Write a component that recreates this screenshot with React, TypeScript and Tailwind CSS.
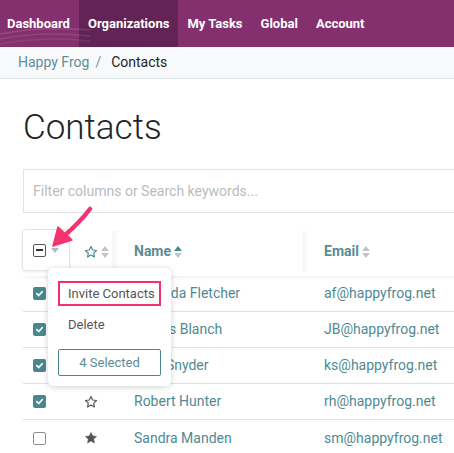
import React from "react";

const teal = "#4a878e";

function CheckBox({ checked }: { checked: boolean }) {
  if (checked) {
    return (
      <span className="inline-flex h-[13px] w-[13px] items-center justify-center rounded-[2px] bg-[#4a868d]">
        <svg width="9" height="9" viewBox="0 0 10 10">
          <path d="M2 5.2 L4.2 7.3 L8 3" fill="none" stroke="#fff" strokeWidth="1.8" strokeLinecap="round" strokeLinejoin="round" />
        </svg>
      </span>
    );
  }
  return <span className="inline-block h-[13px] w-[13px] rounded-[2px] border border-[#8a8f94] bg-white" />;
}

function Star({ filled, color }: { filled: boolean; color: string }) {
  return (
    <svg width="14" height="14" viewBox="0 0 24 24">
      <path
        d="M12 2.5 L14.9 8.6 L21.5 9.4 L16.6 13.9 L17.9 20.5 L12 17.2 L6.1 20.5 L7.4 13.9 L2.5 9.4 L9.1 8.6 Z"
        fill={filled ? color : "none"}
        stroke={color}
        strokeWidth={filled ? 1 : 2}
        strokeLinejoin="round"
      />
    </svg>
  );
}

function Sort({ up, down }: { up: string; down: string }) {
  return (
    <svg width="8" height="14" viewBox="0 0 8 14" className="ml-[3px]">
      <path d="M0 6 L4 1 L8 6 Z" fill={up} />
      <path d="M0 8 L4 13 L8 8 Z" fill={down} />
    </svg>
  );
}

const rows = [
  { name: "Amanda Fletcher", email: "af@happyfrog.net", checked: true, star: false },
  { name: "James Blanch", email: "JB@happyfrog.net", checked: true, star: false },
  { name: "Kate Snyder", email: "ks@happyfrog.net", checked: true, star: false },
  { name: "Robert Hunter", email: "rh@happyfrog.net", checked: true, star: false },
  { name: "Sandra Manden", email: "sm@happyfrog.net", checked: false, star: true },
];

export default function App() {
  return (
    <div className="relative h-[453px] w-[454px] overflow-hidden bg-white" style={{ fontFamily: "Roboto, 'Noto Sans', sans-serif" }}>
      {/* Nav */}
      <nav className="relative flex h-[47px] items-stretch bg-[#84306f] text-[13px] font-bold text-white">
        <svg className="pointer-events-none absolute left-0 top-0" width="90" height="47" viewBox="0 0 90 47">
          <path d="M0 34 Q40 26 90 30" fill="none" stroke="rgba(255,255,255,0.12)" strokeWidth="1.5" />
          <path d="M0 39 Q40 31 90 36" fill="none" stroke="rgba(255,255,255,0.1)" strokeWidth="1.5" />
          <path d="M0 44 Q45 36 90 41" fill="none" stroke="rgba(255,255,255,0.08)" strokeWidth="1.5" />
        </svg>
        <div className="relative flex items-center pl-[7px] pr-[9px]">Dashboard</div>
        <div className="flex items-center bg-[#612455] px-[9px]">Organizations</div>
        <div className="flex items-center px-[9px]">My Tasks</div>
        <div className="flex items-center px-[9px]">Global</div>
        <div className="flex items-center px-[9px]">Account</div>
      </nav>

      {/* Breadcrumb */}
      <div className="flex h-[32px] items-center border-b border-[#dfe6e8] bg-[#f8f9fa] pl-[18px] text-[14px]">
        <span className="text-[#5f8f99]">Happy Frog</span>
        <span className="mx-[6px] text-[#8a9096]">/</span>
        <span className="ml-[4px] text-[#212529]">Contacts</span>
      </div>

      {/* Main */}
      <div className="w-[640px] pl-[23px]">
        <h1 className="mt-[25px] text-[35px] font-light leading-[48px] text-[#212529]">Contacts</h1>
        <div className="mt-[17px] flex h-[44px] items-center border border-[#dde3e8] pl-[9px] text-[14px] text-[#b8bcc0]">
          Filter columns or Search keywords...
        </div>

        {/* Table */}
        <div className="mt-[18px]">
          <div className="flex h-[45px] items-start shadow-[0_3px_4px_-2px_rgba(0,0,0,0.08)]">
            <div className="-ml-[1px] -mt-[2px] flex h-[42px] w-[48px] items-center rounded-[4px] border border-[#e3e6e8] pl-[10px] shadow-[0_1px_3px_rgba(0,0,0,0.08)]">
              <span className="inline-flex h-[13px] w-[13px] items-center justify-center rounded-[2px] border border-[#555]">
                <span className="h-[2px] w-[7px] bg-[#333]" />
              </span>
              <svg width="8" height="5" viewBox="0 0 8 5" className="ml-[5px]">
                <path d="M0 0 L8 0 L4 5 Z" fill="#b5b9bd" />
              </svg>
            </div>
            <div className="flex h-[41px] w-[47px] items-center border-r-[5px] border-[#f7f8f9] pl-[14px]">
              <Star filled={false} color={teal} />
              <Sort up="#c2c6ca" down="#c2c6ca" />
            </div>
            <div className="flex h-[41px] w-[190px] items-center border-r-[5px] border-[#f7f8f9] pl-[17px] text-[14px] font-bold text-[#588c96]">
              Name
              <Sort up={teal} down="#c2c6ca" />
            </div>
            <div className="flex h-[41px] items-center pl-[17px] text-[14px] font-bold text-[#588c96]">
              Email
              <Sort up="#c2c6ca" down="#c2c6ca" />
            </div>
          </div>

          {rows.map((r, i) => (
            <div key={i} className={`flex h-[36px] items-center text-[14px] ${i < rows.length - 1 ? "border-b border-[#dce3e6]" : ""}`}>
              <div className="flex w-[47px] items-center pl-[10px]">
                <CheckBox checked={r.checked} />
              </div>
              <div className="flex w-[47px] items-center pl-[14px]">
                <Star filled={r.star} color="#555" />
              </div>
              <div className="w-[190px] pl-[17px] text-[#4f8a94]">{r.name}</div>
              <div className="pl-[17px] text-[#4f8a94]">{r.email}</div>
            </div>
          ))}
        </div>
      </div>

      {/* Dropdown */}
      <div className="absolute left-[48px] top-[268px] flex w-[123px] flex-col rounded-[5px] bg-white px-[10px] pb-[10px] pt-[13px] shadow-[0_1px_6px_rgba(0,0,0,0.18)]">
        <div className="flex h-[25px] items-center border-2 border-[#f5306f] pl-[8px] text-[13px] text-[#555]">Invite Contacts</div>
        <div className="mt-[8px] flex h-[22px] items-center pl-[10px] text-[13px] text-[#555]">Delete</div>
        <div className="mt-[13px] flex h-[27px] items-center justify-center rounded-[2px] border border-[#4a878e] text-[13px] text-[#5a8d97]">
          4 Selected
        </div>
      </div>

      {/* Pink arrow */}
      <svg className="pointer-events-none absolute left-0 top-0" width="454" height="453" viewBox="0 0 454 453">
        <path d="M90 209 Q80 222 64 236" fill="none" stroke="#f5336f" strokeWidth="4.5" strokeLinecap="round" />
        <path d="M53 246 L58 227 L72 240 Z" fill="#f5336f" stroke="#f5336f" strokeWidth="1.5" strokeLinejoin="round" />
      </svg>
    </div>
  );
}
